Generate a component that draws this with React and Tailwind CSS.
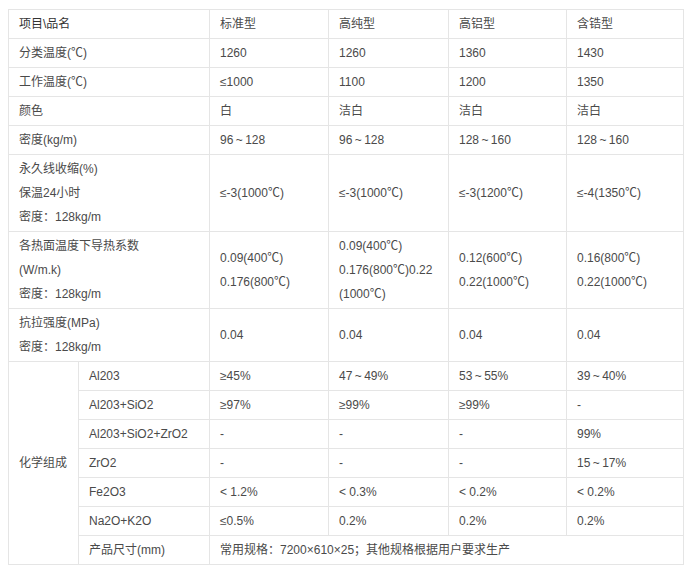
const head = ["标准型", "高纯型", "高铝型", "含锆型"];

// thin spaces around the tilde, as in the original page
const t = (a, b) => `${a}\u2009~\u2009${b}`;

const rows = [
  { label: ["分类温度(℃)"], cells: [["1260"], ["1260"], ["1360"], ["1430"]] },
  { label: ["工作温度(℃)"], cells: [["≤1000"], ["1100"], ["1200"], ["1350"]] },
  { label: ["颜色"], cells: [["白"], ["洁白"], ["洁白"], ["洁白"]] },
  { label: ["密度(kg/m)"], cells: [[t(96, 128)], [t(96, 128)], [t(128, 160)], [t(128, 160)]] },
  {
    label: ["永久线收缩(%)", "保温24小时", "密度：128kg/m"],
    cells: [["≤-3(1000℃)"], ["≤-3(1000℃)"], ["≤-3(1200℃)"], ["≤-4(1350℃)"]],
  },
  {
    label: ["各热面温度下导热系数", "(W/m.k)", "密度：128kg/m"],
    cells: [
      ["0.09(400℃)", "0.176(800℃)"],
      ["0.09(400℃)", "0.176(800℃)0.22", "(1000℃)"],
      ["0.12(600℃)", "0.22(1000℃)"],
      ["0.16(800℃)", "0.22(1000℃)"],
    ],
  },
  { label: ["抗拉强度(MPa)", "密度：128kg/m"], cells: [["0.04"], ["0.04"], ["0.04"], ["0.04"]] },
];

const chem = [
  ["Al203", "≥45%", t(47, "49%"), t(53, "55%"), t(39, "40%")],
  ["Al203+SiO2", "≥97%", "≥99%", "≥99%", "-"],
  ["Al203+SiO2+ZrO2", "-", "-", "-", "99%"],
  ["ZrO2", "-", "-", "-", t(15, "17%")],
  ["Fe2O3", "< 1.2%", "< 0.3%", "< 0.2%", "< 0.2%"],
  ["Na2O+K2O", "≤0.5%", "0.2%", "0.2%", "0.2%"],
];

const td = "border border-[#e5e5e5] px-[10px] py-[2px] align-middle text-left font-normal";

function Lines({ lines }) {
  return lines.map((l, i) => <div key={i}>{l}</div>);
}

export default function App() {
  return (
    <div className="bg-white pt-[9px] pl-[8px] min-h-[567px]">
      <table
        className="table-fixed border-collapse w-[675px] text-[12px] leading-[24px] text-[#4a4a4a]"
        style={{ fontFamily: '"Liberation Sans", "Noto Sans CJK SC", sans-serif' }}
      >
        <colgroup>
          <col className="w-[70px]" />
          <col className="w-[131px]" />
          <col className="w-[119px]" />
          <col className="w-[120px]" />
          <col className="w-[118px]" />
          <col className="w-[117px]" />
        </colgroup>
        <tbody>
          <tr>
            <td colSpan={2} className={`${td} font-bold text-[#333]`}>项目\品名</td>
            {head.map((h) => (
              <td key={h} className={td}>{h}</td>
            ))}
          </tr>
          {rows.map((r, i) => (
            <tr key={i}>
              <td colSpan={2} className={td}><Lines lines={r.label} /></td>
              {r.cells.map((c, j) => (
                <td key={j} className={td}><Lines lines={c} /></td>
              ))}
            </tr>
          ))}
          {chem.map((r, i) => (
            <tr key={"c" + i}>
              {i === 0 && (
                <td rowSpan={7} className={td}>化学组成</td>
              )}
              {r.map((c, j) => (
                <td key={j} className={td}>{c}</td>
              ))}
            </tr>
          ))}
          <tr>
            <td className={td}>产品尺寸(mm)</td>
            <td colSpan={4} className={td}>常用规格：7200×610×25；其他规格根据用户要求生产</td>
          </tr>
        </tbody>
      </table>
    </div>
  );
}
